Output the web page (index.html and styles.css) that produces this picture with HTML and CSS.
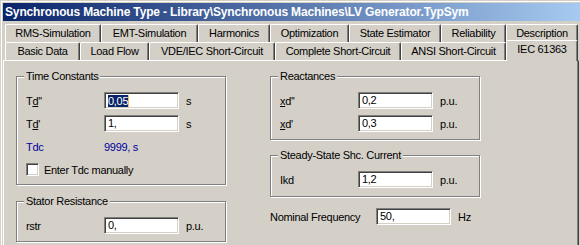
FILE: index.html
```html
<!DOCTYPE html>
<html>
<head>
<meta charset="utf-8">
<link rel="stylesheet" href="styles.css">
</head>
<body>
<div class="window">
  <div class="titlebar">Synchronous Machine Type - Library\Synchronous Machines\LV Generator.TypSym</div>
  <div class="tabs">
    <div class="tabrow row1">
      <div class="tab">RMS-Simulation</div>
      <div class="tab">EMT-Simulation</div>
      <div class="tab">Harmonics</div>
      <div class="tab">Optimization</div>
      <div class="tab">State Estimator</div>
      <div class="tab">Reliability</div>
      <div class="tab">Description</div>
    </div>
    <div class="tabrow row2">
      <div class="tab">Basic Data</div>
      <div class="tab">Load Flow</div>
      <div class="tab">VDE/IEC Short-Circuit</div>
      <div class="tab">Complete Short-Circuit</div>
      <div class="tab">ANSI Short-Circuit</div>
      <div class="tab sel">IEC 61363</div>
    </div>
  </div>
  <div class="panel">
    <div class="columns">
      <div class="col">
        <div class="group g-time">
          <div class="group-title">Time Constants</div>
          <div class="row r-first">
            <span class="lbl">T<u>d</u>''</span>
            <span class="edit"><span class="hl">0,05</span><span class="caret"></span></span>
            <span class="unit">s</span>
          </div>
          <div class="row">
            <span class="lbl">T<u>d</u>'</span>
            <span class="edit">1,</span>
            <span class="unit">s</span>
          </div>
          <div class="row blue">
            <span class="lbl">Tdc</span>
            <span class="val">9999, s</span>
          </div>
          <div class="row">
            <span class="check"></span>
            <span class="check-lbl">Enter Tdc manually</span>
          </div>
        </div>
        <div class="group g-stator">
          <div class="group-title">Stator Resistance</div>
          <div class="row r-first">
            <span class="lbl">rstr</span>
            <span class="edit">0,</span>
            <span class="unit">p.u.</span>
          </div>
        </div>
      </div>
      <div class="col">
        <div class="group g-react">
          <div class="group-title">Reactances</div>
          <div class="row r-first">
            <span class="lbl"><u>x</u>d''</span>
            <span class="edit">0,2</span>
            <span class="unit">p.u.</span>
          </div>
          <div class="row">
            <span class="lbl"><u>x</u>d'</span>
            <span class="edit">0,3</span>
            <span class="unit">p.u.</span>
          </div>
        </div>
        <div class="group g-steady">
          <div class="group-title">Steady-State Shc. Current</div>
          <div class="row r-first">
            <span class="lbl">Ikd</span>
            <span class="edit">1,2</span>
            <span class="unit">p.u.</span>
          </div>
        </div>
        <div class="row freq">
          <span class="lbl-wide">Nominal Frequency</span>
          <span class="edit">50,</span>
          <span class="unit">Hz</span>
        </div>
      </div>
    </div>
  </div>
</div>
</body>
</html>
```

FILE: styles.css
```css
* { box-sizing: border-box; }

html, body {
  margin: 0;
  padding: 0;
}

body {
  width: 580px;
  height: 245px;
  overflow: hidden;
  background: #D4D0C8;
  font-family: "Liberation Sans", Arial, sans-serif;
  font-size: 11px;
  letter-spacing: -0.3px;
  color: #000;
}

.window {
  height: 245px;
  padding: 3px 0 0 3px;
  box-shadow: inset 1px 1px 0 #D4D0C8, inset 2px 2px 0 #fff;
}

.titlebar {
  height: 18px;
  line-height: 18px;
  padding-left: 2px;
  background: linear-gradient(90deg, #0A246A 0%, #A6CAF0 100%);
  color: #fff;
  font-weight: bold;
  font-size: 12px;
  letter-spacing: -0.15px;
  white-space: nowrap;
  overflow: hidden;
}

.tabs {
  padding: 3px 0 0 2px;
}

.tabrow {
  display: flex;
  height: 18px;
}

.tab {
  flex: none;
  height: 18px;
  line-height: 17px;
  text-align: center;
  white-space: nowrap;
  background: #D4D0C8;
  border-top: 1px solid #fff;
  border-left: 1px solid #fff;
  border-right: 1px solid #404040;
  border-radius: 2px 2px 0 0;
  box-shadow: inset -1px 0 0 #808080;
}

.row1 .tab:nth-child(1) { width: 96px; }
.row1 .tab:nth-child(2) { width: 97px; }
.row1 .tab:nth-child(3) { width: 72px; }
.row1 .tab:nth-child(4) { width: 79px; }
.row1 .tab:nth-child(5) { width: 92px; }
.row1 .tab:nth-child(6) { width: 65px; }
.row1 .tab:nth-child(7) { width: 72px; }

.row2 .tab:nth-child(1) { width: 75px; }
.row2 .tab:nth-child(2) { width: 69px; }
.row2 .tab:nth-child(3) { width: 126px; }
.row2 .tab:nth-child(4) { width: 126px; }
.row2 .tab:nth-child(5) { width: 105px; }
.row2 .tab:nth-child(6) { width: 72px; }

.tab.sel {
  position: relative;
  z-index: 1;
  margin-top: -2px;
  height: 21px;
  line-height: 17px;
}

.panel {
  width: 576px;
  height: 185px;
  border-top: 1px solid #fff;
  border-left: 1px solid #fff;
  border-right: 1px solid #404040;
  box-shadow: inset -1px 0 0 #808080;
  padding: 15px 0 0 12px;
}

.columns {
  display: grid;
  grid-template-columns: 210px 210px;
  column-gap: 44px;
  align-items: start;
}

.group {
  border: 1px solid #808080;
  box-shadow: 1px 1px 0 #fff, inset 1px 1px 0 #fff;
  padding: 0 0 0 9px;
}

.group-title {
  width: max-content;
  margin: -7px 0 0 -2px;
  padding: 0 2px;
  height: 13px;
  line-height: 13px;
  background: #D4D0C8;
}

.row {
  display: flex;
  align-items: center;
  height: 17px;
  margin-top: 6px;
}

.row.r-first { margin-top: 9px; }

.lbl {
  width: 78px;
  flex: none;
}

.lbl-wide {
  width: 106px;
  flex: none;
}

.edit {
  flex: none;
  width: 75px;
  height: 17px;
  background: #fff;
  border-top: 1px solid #808080;
  border-left: 1px solid #808080;
  border-bottom: 1px solid #fff;
  border-right: 1px solid #fff;
  box-shadow: inset 1px 1px 0 #404040, inset -1px -1px 0 #D4D0C8;
  padding: 0 0 0 3px;
  line-height: 15px;
  display: flex;
  align-items: center;
}

.hl {
  background: #0A246A;
  color: #fff;
  line-height: 12px;
}

.caret {
  display: inline-block;
  width: 1px;
  height: 12px;
  background: #F0C060;
}

.unit {
  margin-left: 7px;
}

.blue { color: #0000A0; }

.check {
  flex: none;
  width: 13px;
  height: 13px;
  background: #fff;
  border-top: 1px solid #808080;
  border-left: 1px solid #808080;
  border-bottom: 1px solid #fff;
  border-right: 1px solid #fff;
  box-shadow: inset 1px 1px 0 #404040, inset -1px -1px 0 #D4D0C8;
}

.check-lbl {
  margin-left: 5px;
}

.g-time { padding-bottom: 6px; }

.g-stator {
  margin-top: 16px;
  padding-bottom: 7px;
}

.g-react { padding-bottom: 7px; }

.g-steady {
  margin-top: 15px;
  padding-bottom: 8px;
}

.row.freq {
  margin-top: 11px;
}
```
